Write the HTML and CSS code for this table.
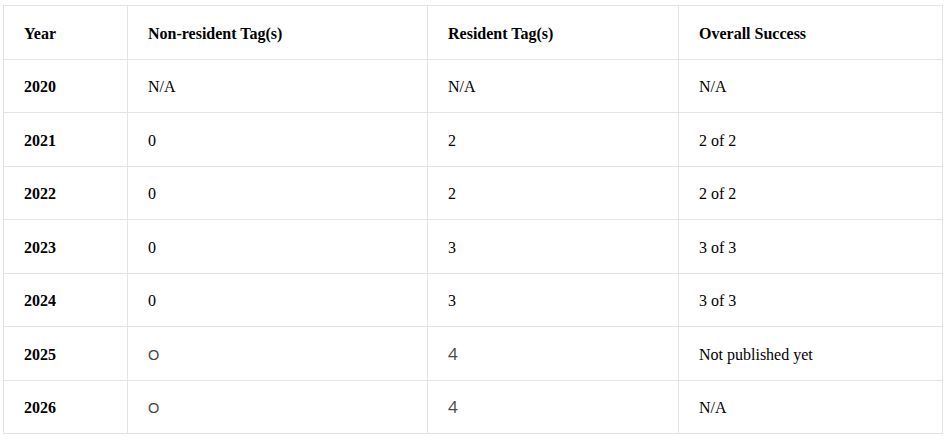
FILE: index.html
```html
<!DOCTYPE html>
<html lang="en">
<head>
<meta charset="utf-8">
<title>Tags</title>
<link rel="stylesheet" href="styles.css">
</head>
<body>
<div class="wrap">
<table class="tags">
  <colgroup>
    <col class="c-year">
    <col class="c-non">
    <col class="c-res">
    <col class="c-all">
  </colgroup>
  <thead>
    <tr><th>Year</th><th>Non-resident Tag(s)</th><th>Resident Tag(s)</th><th>Overall Success</th></tr>
  </thead>
  <tbody>
    <tr><th>2020</th><td>N/A</td><td>N/A</td><td>N/A</td></tr>
    <tr><th>2021</th><td>0</td><td>2</td><td>2 of 2</td></tr>
    <tr><th>2022</th><td>0</td><td>2</td><td>2 of 2</td></tr>
    <tr><th>2023</th><td>0</td><td>3</td><td>3 of 3</td></tr>
    <tr><th>2024</th><td>0</td><td>3</td><td>3 of 3</td></tr>
    <tr><th>2025</th><td><span class="alt-o">O</span></td><td><span class="alt-4">4</span></td><td>Not published yet</td></tr>
    <tr><th>2026</th><td><span class="alt-o">O</span></td><td><span class="alt-4">4</span></td><td>N/A</td></tr>
  </tbody>
</table>
</div>
</body>
</html>
```
FILE: styles.css
```css
html, body {
  margin: 0;
  padding: 0;
  background: #fff;
}
.wrap {
  padding: 5px 0 0 3px;
}
.tags {
  border-collapse: collapse;
  width: 940px;
  font-family: "Liberation Serif", "Times New Roman", serif;
  font-size: 16px;
  line-height: 24px;
  color: #000;
}
.c-year { width: 124px; }
.c-non { width: 300px; }
.c-res { width: 251px; }
.tags th, .tags td {
  border: 1px solid #e3e3e3;
  padding: 15.5px 20px 13px;
  height: 24px;
  text-align: left;
  vertical-align: top;
  white-space: nowrap;
}
.tags th { font-weight: bold; }
.tags td { font-weight: normal; }
.alt-o {
  font-family: "Liberation Sans", Arial, sans-serif;
  font-size: 14.5px;
  line-height: 14px;
  color: #444;
}
.alt-4 {
  font-family: "Open Sans", sans-serif;
  font-weight: 400;
  font-size: 17px;
  line-height: 14px;
  color: #4a4a4a;
}
```
